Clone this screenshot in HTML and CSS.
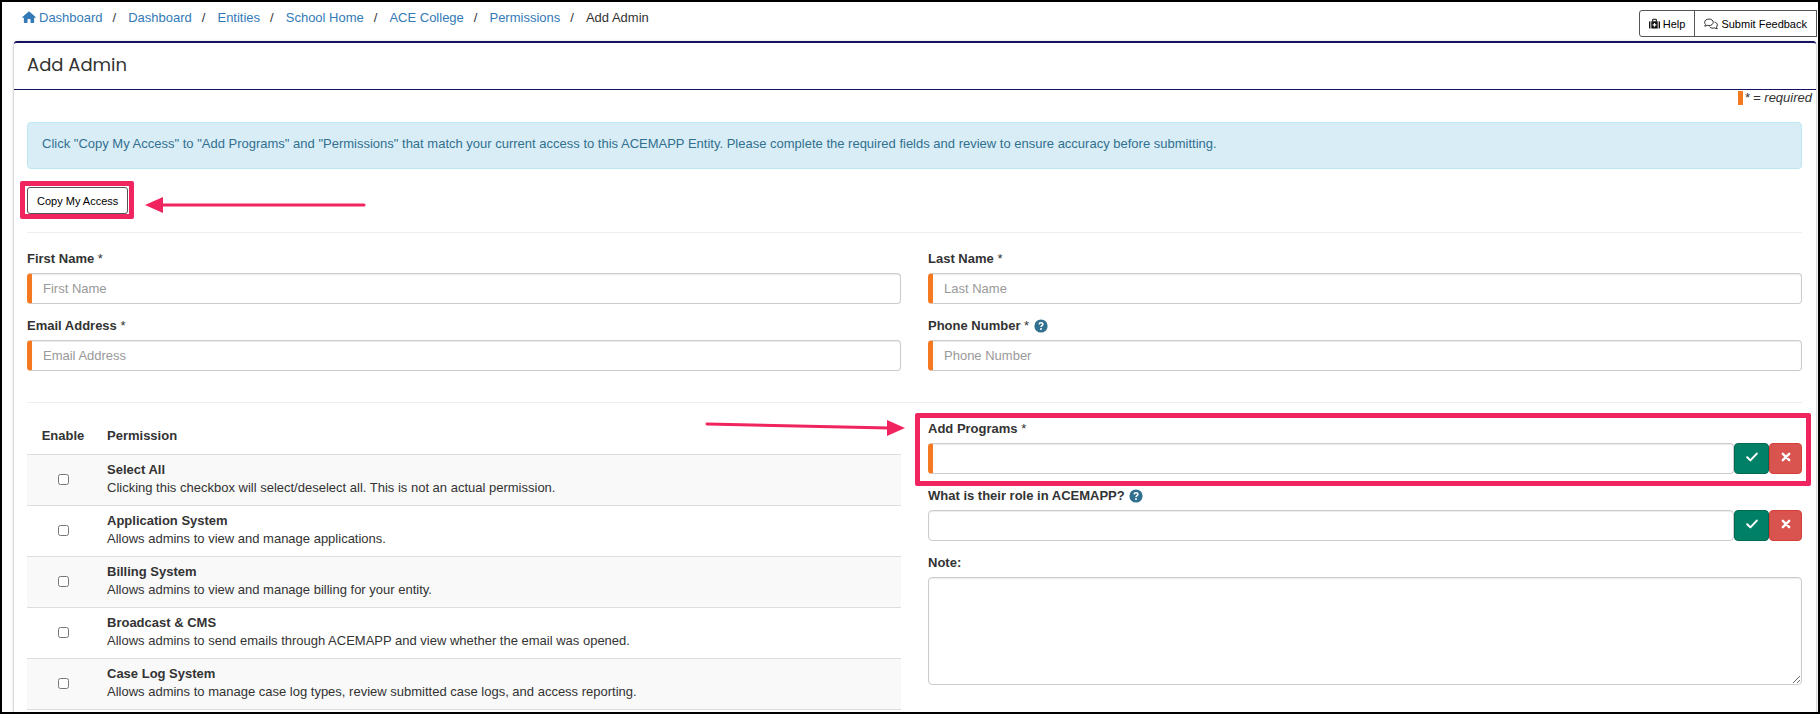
FILE: index.html
```html
<!DOCTYPE html>
<html lang="en">
<head>
    <meta charset="UTF-8">
    <meta name="viewport" content="width=device-width, initial-scale=1.0">
    <title>Add Admin</title>
    <link rel="stylesheet" href="styles.css">
</head>
<body>
    <!-- shared icons -->
    <svg class="sprite" aria-hidden="true">
        <symbol id="icon-check" viewBox="0 0 12 10"><path d="M1.2 5.2 4.4 8.4 10.8 1.6" fill="none" stroke="currentColor" stroke-width="2" stroke-linecap="round" stroke-linejoin="round"/></symbol>
        <symbol id="icon-times" viewBox="0 0 10 10"><path d="M1.8 1.8 8.2 8.2M8.2 1.8 1.8 8.2" fill="none" stroke="currentColor" stroke-width="2.4" stroke-linecap="round"/></symbol>
        <symbol id="icon-question" viewBox="0 0 14 14"><circle cx="7" cy="7" r="6.6" fill="#31708f"/><path d="M5.1 5.4C5.2 4.3 6 3.8 7 3.8c1.1 0 1.9.6 1.9 1.5C8.900 6.500 7 6.600 7 8" fill="none" stroke="#fff" stroke-width="1.500"/><circle cx="7" cy="10" r="1" fill="#fff"/></symbol>
    </svg>

    <header class="topbar">
        <nav aria-label="Breadcrumb">
            <ol class="breadcrumb">
                <li><a href="#"><svg class="icon-home" viewBox="0 0 16 14" aria-hidden="true"><path d="M8 .3 15.700 7c.4.4.2 1-.4 1H14v5c0 .6-.4 1-1 1h-2.500c-.4 0-.7-.3-.7-.7V10.200c0-.5-.3-.8-.8-.8H7c-.5 0-.8.3-.8.8v3.100c0 .4-.3.7-.7.7H3c-.6 0-1-.4-1-1V8H.7c-.6 0-.8-.6-.4-1z" fill="currentColor"/></svg>Dashboard</a></li>
                <li><a href="#">Dashboard</a></li>
                <li><a href="#">Entities</a></li>
                <li><a href="#">School Home</a></li>
                <li><a href="#">ACE College</a></li>
                <li><a href="#">Permissions</a></li>
                <li>Add Admin</li>
            </ol>
        </nav>
        <div class="btn-group">
            <button type="button" class="btn">
                <svg class="icon-help" viewBox="0 0 12 12" aria-hidden="true"><path d="M4 3V1.600C4 1.100 4.300.8 4.800.8h2.400c.5 0 .8.3.8.8V3" fill="none" stroke="#111" stroke-width="1.200"/><path d="M0 4c0-.6.4-1 1-1h.5v8H1c-.6 0-1-.4-1-1zM2.500 3h7v8h-7zM10.500 3h.5c.6 0 1 .4 1 1v6c0 .6-.4 1-1 1h-.5z" fill="#111"/><path d="M6 5v4M4 7h4" stroke="#fff" stroke-width="1.300"/></svg>Help
            </button>
            <button type="button" class="btn">
                <svg class="icon-comments" viewBox="0 0 15 12" fill="none" stroke="#222" stroke-width="1" stroke-linejoin="round" aria-hidden="true"><path d="M5.300.7C2.700.7.7 2.200.7 4.200c0 .9.400 1.700 1 2.300L.8 8.300c1 0 1.900-.4 2.600-.9.600.2 1.200.3 1.900.3 2.600 0 4.600-1.500 4.600-3.500S7.900.7 5.300.7z"/><path d="M11.300 3.900c1.800.4 3 1.600 3 3.100 0 .9-.4 1.700-1 2.300l.9 1.800c-1 0-1.900-.4-2.600-.9-.6.200-1.200.300-1.900.300-1.700 0-3.200-.7-3.900-1.700"/></svg>Submit Feedback
            </button>
        </div>
    </header>

    <main class="panel">
        <div class="panel-heading">
            <h1>Add Admin</h1>
        </div>
        <p class="required-note"><span class="required-mark"></span>* = required</p>

        <form class="panel-body">
            <div class="alert">Click "Copy My Access" to "Add Programs" and "Permissions" that match your current access to this ACEMAPP Entity. Please complete the required fields and review to ensure accuracy before submitting.</div>

            <div class="copy-access">
                <button type="button" class="btn btn-copy">Copy My Access</button>
                <svg class="arrow arrow-left" viewBox="0 0 222 16" aria-hidden="true"><path d="M16 8H219" stroke="#f0245e" stroke-width="3" stroke-linecap="round"/><path d="M0 8 18 0v16z" fill="#f0245e"/></svg>
            </div>

            <hr>

            <div class="columns">
                <div class="form-group">
                    <label for="firstName">First Name <span class="star">*</span></label>
                    <input type="text" id="firstName" class="form-control required" placeholder="First Name">
                </div>
                <div class="form-group">
                    <label for="lastName">Last Name <span class="star">*</span></label>
                    <input type="text" id="lastName" class="form-control required" placeholder="Last Name">
                </div>
                <div class="form-group">
                    <label for="email">Email Address <span class="star">*</span></label>
                    <input type="email" id="email" class="form-control required" placeholder="Email Address">
                </div>
                <div class="form-group">
                    <label for="phone">Phone Number <span class="star">*</span> <svg class="icon-question"><use href="#icon-question"/></svg></label>
                    <input type="tel" id="phone" class="form-control required" placeholder="Phone Number">
                </div>
            </div>

            <hr>

            <div class="columns">
                <table class="permissions">
                    <thead>
                        <tr>
                            <th class="enable">Enable</th>
                            <th>Permission</th>
                        </tr>
                    </thead>
                    <tbody>
                        <tr>
                            <td class="enable"><input type="checkbox" id="permAll"></td>
                            <td><label for="permAll">Select All</label>Clicking this checkbox will select/deselect all. This is not an actual permission.</td>
                        </tr>
                        <tr>
                            <td class="enable"><input type="checkbox" id="permApplication"></td>
                            <td><label for="permApplication">Application System</label>Allows admins to view and manage applications.</td>
                        </tr>
                        <tr>
                            <td class="enable"><input type="checkbox" id="permBilling"></td>
                            <td><label for="permBilling">Billing System</label>Allows admins to view and manage billing for your entity.</td>
                        </tr>
                        <tr>
                            <td class="enable"><input type="checkbox" id="permBroadcast"></td>
                            <td><label for="permBroadcast">Broadcast &amp; CMS</label>Allows admins to send emails through ACEMAPP and view whether the email was opened.</td>
                        </tr>
                        <tr>
                            <td class="enable"><input type="checkbox" id="permCaseLog"></td>
                            <td><label for="permCaseLog">Case Log System</label>Allows admins to manage case log types, review submitted case logs, and access reporting.</td>
                        </tr>
                    </tbody>
                </table>

                <div class="details">
                    <div class="form-group add-programs">
                        <label for="programs">Add Programs <span class="star">*</span></label>
                        <div class="input-group">
                            <input type="text" id="programs" class="form-control required">
                            <button type="button" class="btn-icon btn-all" aria-label="Select all programs"><svg class="icon-check"><use href="#icon-check"/></svg></button>
                            <button type="button" class="btn-icon btn-none" aria-label="Clear programs"><svg class="icon-times"><use href="#icon-times"/></svg></button>
                        </div>
                        <svg class="arrow arrow-right" viewBox="0 0 200 16" aria-hidden="true"><path d="M2 4 184 8" stroke="#f0245e" stroke-width="3" stroke-linecap="round"/><path d="M200 8 182 0v16z" fill="#f0245e"/></svg>
                    </div>
                    <div class="form-group">
                        <label for="role">What is their role in ACEMAPP? <svg class="icon-question"><use href="#icon-question"/></svg></label>
                        <div class="input-group">
                            <input type="text" id="role" class="form-control">
                            <button type="button" class="btn-icon btn-all" aria-label="Select all roles"><svg class="icon-check"><use href="#icon-check"/></svg></button>
                            <button type="button" class="btn-icon btn-none" aria-label="Clear roles"><svg class="icon-times"><use href="#icon-times"/></svg></button>
                        </div>
                    </div>
                    <div class="form-group">
                        <label for="note">Note:</label>
                        <textarea id="note" class="form-control"></textarea>
                    </div>
                </div>
            </div>
        </form>
    </main>
</body>
</html>
```
FILE: styles.css
```css
* {
    box-sizing: border-box;
}
body {
    display: flex;
    flex-direction: column;
    min-height: 100vh;
    margin: 0;
    border: 2px solid #000;
    background: #fff;
    color: #333;
    font-family: "Liberation Sans", Arial, sans-serif;
    font-size: 13px;
    line-height: 18px;
}
a {
    color: #337ab7;
    text-decoration: none;
}
button, input, textarea {
    font-family: inherit;
}
hr {
    height: 1px;
    margin: 18px 0 17px;
    border: none;
    background: #eee;
}
.sprite {
    display: none;
}

/* top bar */
.topbar {
    display: flex;
    justify-content: space-between;
    padding: 7px 1px 4px 20px;
}
.breadcrumb {
    display: flex;
    margin: 0;
    padding: 0;
    list-style: none;
}
.breadcrumb li + li::before {
    content: "/";
    margin: 0 12px 0 10px;
}
.icon-home {
    width: 14px;
    height: 12px;
    margin-right: 3px;
    vertical-align: -1px;
}
.btn-group {
    display: flex;
    margin-top: 1px;
}
.btn {
    display: flex;
    align-items: center;
    height: 27px;
    padding: 0 9px;
    border: 1px solid #555;
    border-radius: 3px;
    background: #fff;
    color: #000;
    font-size: 11px;
}
.btn-group .btn:first-child {
    border-radius: 3px 0 0 3px;
}
.btn-group .btn:last-child {
    margin-left: -1px;
    border-radius: 0;
}
.icon-help {
    width: 11px;
    height: 12px;
    margin-right: 3px;
}
.icon-comments {
    width: 14px;
    height: 12px;
    margin-right: 3px;
}

/* panel */
.panel {
    flex: 1;
    margin: 0 2px 0 12px;
    border-top: 2px solid #17125f;
    border-radius: 3px 3px 0 0;
    box-shadow: 0 1px 3px rgba(0, 0, 0, 0.4);
}
.panel-heading {
    padding: 9px 13px 11px;
    border-bottom: 1px solid #17125f;
}
h1 {
    margin: 0;
    font-family: Poppins, Inter, sans-serif;
    font-size: 18px;
    font-weight: 400;
    line-height: 26px;
}
.required-note {
    display: flex;
    align-items: center;
    justify-content: flex-end;
    height: 16px;
    margin: 0 4px 16px;
    font-style: italic;
}
.required-mark {
    width: 5px;
    height: 14px;
    margin-right: 1px;
    background: #f47920;
}
.panel-body {
    padding: 0 14px 0 13px;
}
.alert {
    padding: 12px 14px 15px;
    border: 1px solid #bce8f1;
    border-radius: 4px;
    background: #d9edf7;
    color: #31708f;
}

/* callouts */
.copy-access {
    position: relative;
    width: fit-content;
    margin-top: 18px;
}
.copy-access::after, .add-programs::after {
    content: "";
    position: absolute;
    border: 5px solid #f0245e;
    border-radius: 2px;
    pointer-events: none;
}
.copy-access::after {
    inset: -6px -6px -5px -7px;
}
.add-programs::after {
    inset: -7px -9px -12px -13px;
}
.arrow {
    position: absolute;
}
.arrow-left {
    top: 10px;
    left: calc(100% + 17px);
    width: 222px;
    height: 16px;
}
.arrow-right {
    top: 0;
    right: calc(100% + 23px);
    width: 200px;
    height: 16px;
}

/* form */
.columns {
    display: grid;
    grid-template-columns: 1fr 1fr;
    column-gap: 27px;
    align-items: start;
}
.form-group {
    position: relative;
    margin-bottom: 13px;
}
.form-group label {
    display: block;
    margin-bottom: 5px;
    font-weight: bold;
}
.star {
    font-weight: normal;
}
.icon-question {
    width: 14px;
    height: 14px;
    margin-left: 1px;
    vertical-align: -3px;
}
.form-control {
    display: block;
    width: 100%;
    height: 31px;
    padding: 0 11px;
    border: 1px solid #ccc;
    border-radius: 4px;
    background: #fff;
    box-shadow: inset 0 1px 1px rgba(0, 0, 0, 0.08);
    color: #555;
    font-size: 13px;
}
.form-control::placeholder {
    color: #999;
}
.form-control.required {
    border-left: 5px solid #f47920;
}
textarea.form-control {
    height: 108px;
    padding: 6px 11px;
}
.input-group {
    display: flex;
}
.input-group .form-control {
    flex: 1;
}
.btn-icon {
    display: flex;
    align-items: center;
    justify-content: center;
    height: 31px;
    padding: 0 0 3px;
    border-radius: 4px;
    color: #fff;
}
.btn-all {
    width: 35px;
    border: 1px solid #006a50;
    background: #008066;
}
.btn-none {
    width: 33px;
    border: 1px solid #d43f3a;
    background: #d9534f;
}
.icon-check {
    width: 12px;
    height: 10px;
}
.icon-times {
    width: 10px;
    height: 10px;
}

/* permissions */
.permissions {
    width: 100%;
    border-spacing: 0;
}
.permissions th {
    padding: 7px 8px 9px;
    text-align: left;
}
.permissions td {
    padding: 6px 8px 8px;
    border-top: 1px solid #ddd;
}
.permissions tbody tr:nth-child(odd) {
    background: #f9f9f9;
}
.permissions tbody tr:last-child td {
    border-bottom: 1px solid #ddd;
}
.permissions .enable {
    width: 72px;
    text-align: center;
}
.permissions label {
    display: block;
    font-weight: bold;
}
.permissions input {
    display: block;
    width: 11px;
    height: 11px;
    margin: 0 auto;
}
```
